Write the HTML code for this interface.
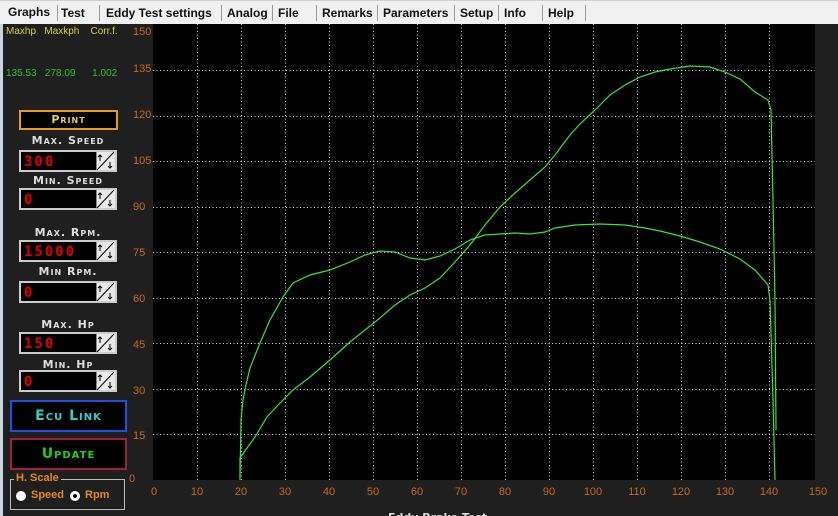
<!DOCTYPE html>
<html><head><meta charset="utf-8"><style>
*{margin:0;padding:0;box-sizing:border-box}
body{width:838px;height:516px;overflow:hidden;background:#1f1f1f;position:relative;font-family:"Liberation Sans",sans-serif}
.tabs{position:absolute;left:0;top:0;width:838px;height:24px;background:#f0f0f0;border-top:1px solid #c8d0d8}
.tab{position:absolute;top:5px;font:bold 12px "Liberation Sans",sans-serif;color:#111;white-space:nowrap}
.sep{position:absolute;top:4px;width:1px;height:16px;background:#999}
.a{position:absolute;white-space:nowrap}
.lbl{font:bold 11px "DejaVu Sans",sans-serif;color:#ddd;letter-spacing:1px;font-variant:small-caps;text-align:center;width:120px;left:0}
.box{position:absolute;left:19px;width:98px;height:22px;background:#000;border:2px solid #ccc}
.box span{position:absolute;left:3px;top:2px;color:#d00;font:bold 14px "DejaVu Sans Mono",monospace;letter-spacing:2px}
.spin{position:absolute;right:0;top:0;width:19px;height:18px;background:#e8e8e8;border-left:1px solid #888}
</style></head><body>
<div class="tabs">
<div class="tab" style="left:8px;top:4px">Graphs</div><div class="sep" style="left:57px"></div>
<div class="tab" style="left:61px">Test</div><div class="sep" style="left:99px"></div>
<div class="tab" style="left:106px">Eddy Test settings</div><div class="sep" style="left:221px"></div>
<div class="tab" style="left:227px">Analog</div><div class="sep" style="left:272px"></div>
<div class="tab" style="left:278px">File</div><div class="sep" style="left:316px"></div>
<div class="tab" style="left:322px">Remarks</div><div class="sep" style="left:377px"></div>
<div class="tab" style="left:383px">Parameters</div><div class="sep" style="left:454px"></div>
<div class="tab" style="left:460px">Setup</div><div class="sep" style="left:498px"></div>
<div class="tab" style="left:504px">Info</div><div class="sep" style="left:542px"></div>
<div class="tab" style="left:548px">Help</div><div class="sep" style="left:585px"></div>
</div>
<div class="a" style="left:0;top:24px;width:3px;height:492px;background:#c8d4e0"></div>
<div class="a" style="left:6px;top:26px;color:#d8d040;font:10px 'Liberation Sans'">Maxhp&nbsp;&nbsp;&nbsp;Maxkph&nbsp;&nbsp;&nbsp;&nbsp;Corr.f.</div>
<div class="a" style="left:6px;top:68px;color:#2ec02e;font:10px 'Liberation Sans'">135.53&nbsp;&nbsp;&nbsp;278.09&nbsp;&nbsp;&nbsp;&nbsp;&nbsp;&nbsp;1.002</div>
<div class="a" style="left:19px;top:110px;width:99px;height:20px;background:#000;border:2px solid #e89a20;color:#e0d060;font:bold 11px 'DejaVu Sans';text-align:center;line-height:16px;font-variant:small-caps;letter-spacing:1px">Print</div>
<div class="a lbl" style="top:134px;left:8px">Max. Speed</div>
<div class="box" style="top:150px"><span>300</span><div class="spin"></div></div>
<div class="a lbl" style="top:174px;left:8px">Min. Speed</div>
<div class="box" style="top:188px"><span>0</span><div class="spin"></div></div>
<div class="a lbl" style="top:226px;left:8px">Max. Rpm.</div>
<div class="box" style="top:240px"><span>15000</span><div class="spin"></div></div>
<div class="a lbl" style="top:265px;left:8px">Min Rpm.</div>
<div class="box" style="top:281px"><span>0</span><div class="spin"></div></div>
<div class="a lbl" style="top:318px;left:8px">Max. Hp</div>
<div class="box" style="top:332px"><span>150</span><div class="spin"></div></div>
<div class="a lbl" style="top:358px;left:8px">Min. Hp</div>
<div class="box" style="top:370px"><span>0</span><div class="spin"></div></div>
<div class="a" style="left:10px;top:400px;width:117px;height:32px;background:#000;border:2px solid #2050e0;color:#30d0d0;font:bold 14px 'DejaVu Sans';text-align:center;line-height:28px;font-variant:small-caps;letter-spacing:1px">Ecu Link</div>
<div class="a" style="left:10px;top:438px;width:117px;height:32px;background:#000;border:2px solid #a02040;color:#20d020;font:bold 14px 'DejaVu Sans';text-align:center;line-height:28px;font-variant:small-caps;letter-spacing:1px">Update</div>
<div class="a" style="left:10px;top:479px;width:115px;height:31px;border:1px solid #bbb"></div>
<div class="a" style="left:14px;top:472px;background:#1f1f1f;color:#e08a20;font:bold 11px 'Liberation Sans';padding:0 2px">H. Scale</div>
<div class="a" style="left:16px;top:491px;width:10px;height:10px;border-radius:50%;background:#fff"></div>
<div class="a" style="left:31px;top:489px;color:#e08a20;font:bold 11px 'Liberation Sans'">Speed</div>
<div class="a" style="left:70px;top:491px;width:10px;height:10px;border-radius:50%;background:#fff;border:3px solid #fff;box-shadow:inset 0 0 0 2px #000"></div>
<div class="a" style="left:85px;top:489px;color:#e08a20;font:bold 11px 'Liberation Sans'">Rpm</div>
<svg class="a" style="left:0;top:0" width="838" height="516">
<rect x="153" y="24" width="662" height="456" fill="#000"/>
<g stroke="#ddd" stroke-width="1" stroke-dasharray="1 2.5">
<path d="M197.5 24V480M241.5 24V480M285.5 24V480M329.5 24V480M373.5 24V480M417.5 24V480M461.5 24V480M505.5 24V480M549.5 24V480M593.5 24V480M637.5 24V480M681.5 24V480M725.5 24V480M769.5 24V480"/>
<path d="M153 70.5H815M153 116.5H815M153 161.5H815M153 207.5H815M153 252.5H815M153 298.5H815M153 343.5H815M153 389.5H815M153 434.5H815"/>
</g>
<g fill="none" stroke="#3ee03e" stroke-width="1.2">
<polyline points="240,478 241,420 243,400 246,385 250,368 260,343 270,320 283,297 293,283 310,275 330,270 350,262 365,255 380,251 395,252 410,258 425,260 440,256 455,249 470,240 485,235 500,234 515,233 530,234 545,232 555,228 575,225 600,224 625,225 645,228 660,231 680,236 700,242 720,249 740,259 755,270 768,285 770,300 773,400 775,480"/>
<polyline points="240,480 240,458 255,437 267,417 280,403 293,390 310,377 330,360 350,342 365,330 380,318 395,305 410,295 425,288 440,278 455,262 470,245 485,225 500,207 515,193 530,180 545,167 555,155 570,135 580,124 595,110 610,95 625,85 640,77 655,72 670,69 690,66 710,67 725,72 740,79 755,92 768,100 771,110 773,200 775,300 776,430"/>
</g>
<g fill="#c86a1e" font-family="Liberation Sans" font-size="11">
<text x="133" y="35">150</text><text x="133" y="72">135</text><text x="133" y="118">120</text><text x="133" y="164">105</text><text x="133" y="210">90</text><text x="133" y="256">75</text><text x="133" y="302">60</text><text x="133" y="348">45</text><text x="133" y="394">30</text><text x="133" y="439">15</text><text x="129" y="482">0</text>
<g text-anchor="middle"><text x="154" y="495">0</text><text x="197" y="495">10</text><text x="241" y="495">20</text><text x="285" y="495">30</text><text x="329" y="495">40</text><text x="373" y="495">50</text><text x="417" y="495">60</text><text x="461" y="495">70</text><text x="505" y="495">80</text><text x="549" y="495">90</text><text x="593" y="495">100</text><text x="637" y="495">110</text><text x="681" y="495">120</text><text x="725" y="495">130</text><text x="769" y="495">140</text><text x="818" y="495">150</text></g>
</g>
<text x="388" y="521" fill="#ddd" font-family="DejaVu Sans" font-weight="bold" font-size="11">Eddy Brake Test</text>
<g stroke="#000" stroke-width="1" fill="none">
<path d="M97 170L114 152M97 208L114 190M97 260L114 242M97 301L114 283M97 352L114 334M97 390L114 372"/>
<path d="M100 161V155M98 157L100 155L102 157M110 162V168M108 166L110 168L112 166"/>
<path d="M100 199V193M98 195L100 193L102 195M110 200V206M108 204L110 206L112 204"/>
<path d="M100 251V245M98 247L100 245L102 247M110 252V258M108 256L110 258L112 256"/>
<path d="M100 292V286M98 288L100 286L102 288M110 293V299M108 297L110 299L112 297"/>
<path d="M100 343V337M98 339L100 337L102 339M110 344V350M108 348L110 350L112 348"/>
<path d="M100 381V375M98 377L100 375L102 377M110 382V388M108 386L110 388L112 386"/>
</g>
</svg>
</body></html>
